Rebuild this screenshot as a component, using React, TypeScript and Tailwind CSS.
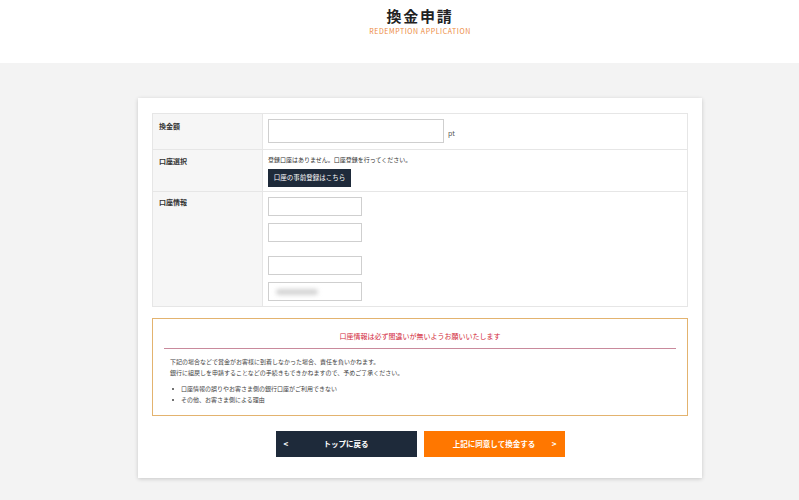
import React from "react";

const font = { fontFamily: '"Noto Sans CJK JP", "Noto Sans", sans-serif' };

function Input({ w, h, children }: { w: string; h: string; children?: React.ReactNode }) {
  return (
    <div className={`${w} ${h} border border-[#cfcfcf] bg-white relative overflow-hidden`}>{children}</div>
  );
}

export default function App() {
  return (
    <div style={font} className="min-h-[500px] bg-[#f3f3f3] text-[#333]">
      <div className="bg-white h-[63px]">
        <div className="ml-[138px] w-[564px] flex flex-col items-center pt-[6px]">
          <div className="text-[15px] font-bold leading-[20px] tracking-[0.12em] text-[#222]">換金申請</div>
          <div className="text-[7px] leading-[10px] tracking-[0.08em] text-[#ec8a3e] -mt-[0px]">REDEMPTION APPLICATION</div>
        </div>
      </div>
      <div className="pt-[35px] pb-[23px]">
        <div className="ml-[138px] w-[564px] bg-white shadow-[0_1px_4px_rgba(0,0,0,0.18)] px-[14px] pt-[15px] pb-[21px]">
          <div className="border border-[#e6e6e6] text-[7px]">
            <div className="flex h-[36px] border-b border-[#e6e6e6]">
              <div className="w-[110px] bg-[#f6f6f6] border-r border-[#e6e6e6] pl-[6px] pt-[7px] font-bold">換金額</div>
              <div className="flex-1 pl-[5px] pt-[5px] flex items-start gap-[4px]">
                <Input w="w-[176px]" h="h-[24px]" />
                <span className="text-[7px] mt-[9px] text-[#555]">pt</span>
              </div>
            </div>
            <div className="flex h-[42px] border-b border-[#e6e6e6]">
              <div className="w-[110px] bg-[#f6f6f6] border-r border-[#e6e6e6] pl-[6px] pt-[6px] font-bold">口座選択</div>
              <div className="flex-1 pl-[5px] pt-[5px]">
                <div className="text-[6px] leading-[9px]">登録口座はありません。口座登録を行ってください。</div>
                <div className="mt-[5px] w-[83px] h-[18px] bg-[#1e2a3a] text-white text-[6.5px] flex items-center justify-center">口座の事前登録はこちら</div>
              </div>
            </div>
            <div className="flex h-[114px]">
              <div className="w-[110px] bg-[#f6f6f6] border-r border-[#e6e6e6] pl-[6px] pt-[5px] font-bold">口座情報</div>
              <div className="flex-1 pl-[5px] pt-[5px] flex flex-col">
                <Input w="w-[94px]" h="h-[19px]" />
                <div className="mt-[7px]"><Input w="w-[94px]" h="h-[19px]" /></div>
                <div className="mt-[14px]"><Input w="w-[94px]" h="h-[19px]" /></div>
                <div className="mt-[7px]">
                  <Input w="w-[94px]" h="h-[19px]">
                    <div className="absolute left-[7px] top-[6px] w-[42px] h-[6px] bg-[#d4d4d4] rounded-full blur-[2px]" />
                  </Input>
                </div>
              </div>
            </div>
          </div>

          <div className="mt-[11px] border border-[#e3b36f] h-[98px] px-[11px] pt-[12px]">
            <div className="text-center text-[7px] leading-[10px] text-[#d2283a]">口座情報は必ず間違いが無いようお願いいたします</div>
            <div className="mt-[7px] h-px bg-[#c98a9c]" />
            <div className="pl-[6px] pt-[7px] text-[6px] leading-[11px] text-[#444]">
              <div>下記の場合などで賞金がお客様に到着しなかった場合、責任を負いかねます。</div>
              <div>銀行に組戻しを申請することなどの手続きもできかねますので、予めご了承ください。</div>
              <div className="mt-[5px] flex flex-col">
                <div className="flex items-center"><span className="w-[2px] h-[2px] bg-[#444] rounded-full ml-[2px] mr-[7px]" />口座情報の誤りやお客さま側の銀行口座がご利用できない</div>
                <div className="flex items-center"><span className="w-[2px] h-[2px] bg-[#444] rounded-full ml-[2px] mr-[7px]" />その他、お客さま側による理由</div>
              </div>
            </div>
          </div>

          <div className="mt-[15px] flex justify-center gap-[7px]">
            <div className="w-[141px] h-[26px] bg-[#1e2a3a] text-white flex items-center px-[8px] relative">
              <span className="text-[8px] font-bold">&lt;</span>
              <span className="absolute inset-0 flex items-center justify-center text-[7.5px] font-bold">トップに戻る</span>
            </div>
            <div className="w-[141px] h-[26px] bg-[#ff7700] text-white flex items-center justify-end px-[8px] relative">
              <span className="absolute inset-0 flex items-center justify-center text-[7.5px] font-bold">上記に同意して換金する</span>
              <span className="text-[8px] font-bold">&gt;</span>
            </div>
          </div>
        </div>
      </div>
    </div>
  );
}
